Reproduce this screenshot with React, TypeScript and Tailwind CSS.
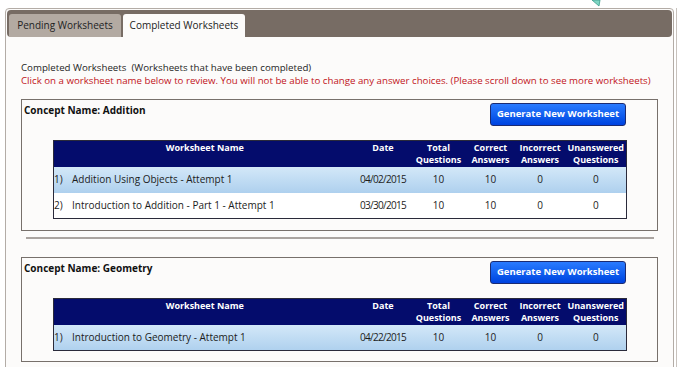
import React from "react";

type Row = { n: string; name: string; date: string; total: string; correct: string; incorrect: string; unanswered: string };

const font = { fontFamily: '"Open Sans", "Noto Sans", sans-serif' };

function WorksheetTable({ rows }: { rows: Row[] }) {
  return (
    <table className="border-collapse border border-[#2a2a3a] table-fixed w-[573px]">
      <colgroup>
        <col className="w-[302px]" />
        <col className="w-[55px]" />
        <col className="w-[56px]" />
        <col className="w-[48px]" />
        <col className="w-[51px]" />
        <col className="w-[61px]" />
      </colgroup>
      <thead>
        <tr className="bg-[#040c6c] text-white font-bold text-[9px] leading-[12px] h-[26px] align-top">
          <th className="pt-px font-bold">Worksheet Name</th>
          <th className="pt-px font-bold">Date</th>
          <th className="pt-px font-bold">Total<br />Questions</th>
          <th className="pt-px font-bold">Correct<br />Answers</th>
          <th className="pt-px font-bold">Incorrect<br />Answers</th>
          <th className="pt-px font-bold">Unanswered<br />Questions</th>
        </tr>
      </thead>
      <tbody>
        {rows.map((r, i) => (
          <tr
            key={i}
            className={
              "h-[26px] text-[10px] text-[#1c1c1c] " +
              (i % 2 === 0 ? "bg-gradient-to-b from-[#d3e8f8] to-[#aed0ee]" : "bg-white")
            }
          >
            <td className="pl-0">
              <span className="inline-block w-[18px]">{r.n}</span>
              {r.name}
            </td>
            <td className="text-center tracking-[-0.7px]">{r.date}</td>
            <td className="text-center">{r.total}</td>
            <td className="text-center">{r.correct}</td>
            <td className="text-center">{r.incorrect}</td>
            <td className="text-center">{r.unanswered}</td>
          </tr>
        ))}
      </tbody>
    </table>
  );
}

function ConceptBox({ title, rows, height }: { title: string; rows: Row[]; height: string }) {
  return (
    <div className={"ml-[14px] w-[637px] border-[1.5px] border-[#77706b] " + height}>
      <div className="flex justify-between items-start">
        <div className="pl-[2px] pt-[3px] text-[10px] font-bold text-[#111]">Concept Name: {title}</div>
        <button className="mt-[3px] mr-[31px] w-[136px] h-[23px] rounded-[3px] border border-[#1b2b72] bg-gradient-to-b from-[#2a7bff] to-[#0042e0] text-white font-bold text-[9.5px]">
          Generate New Worksheet
        </button>
      </div>
      <div className="ml-[31px] mt-[14px]">
        <WorksheetTable rows={rows} />
      </div>
    </div>
  );
}

export default function App() {
  const add: Row[] = [
    { n: "1)", name: "Addition Using Objects - Attempt 1", date: "04/02/2015", total: "10", correct: "10", incorrect: "0", unanswered: "0" },
    { n: "2)", name: "Introduction to Addition - Part 1 - Attempt 1", date: "03/30/2015", total: "10", correct: "10", incorrect: "0", unanswered: "0" },
  ];
  const geo: Row[] = [
    { n: "1)", name: "Introduction to Geometry - Attempt 1", date: "04/22/2015", total: "10", correct: "10", incorrect: "0", unanswered: "0" },
  ];
  return (
    <div className="relative w-[679px] h-[367px] overflow-hidden bg-white" style={font}>
      <svg className="absolute left-[591px] top-0" width="10" height="7" viewBox="0 0 10 7">
        <path d="M1 0 L9 0 L8 6 Z" fill="#7fd6c4" stroke="#3a9c8a" strokeWidth="0.8" />
      </svg>
      <div className="absolute left-[676px] top-[8px] w-px h-[360px] bg-[#c8c2bd]" />
      <div className="ml-[5px] mt-[8px] w-[669px] h-[400px] border border-[#b3aca6] rounded-t-[4px] bg-[#fcfbfa] p-px">
        <div className="h-[27px] rounded-[4px] bg-[#776c64] flex items-end pl-[2px] gap-[2px]">
          <div className="w-[112px] h-[23px] rounded-t-[3px] bg-[#b3aaa2] text-[10px] text-[#222] flex items-center justify-center">
            Pending Worksheets
          </div>
          <div className="w-[122px] h-[23px] rounded-t-[3px] bg-[#fcfbfa] text-[10px] text-[#222] flex items-center justify-center">
            Completed Worksheets
          </div>
        </div>
        <div className="pl-[14px] pt-[24px] text-[9.7px] leading-[13px]">
          <div className="text-[#1e1e1e] whitespace-pre">Completed Worksheets  (Worksheets that have been completed)</div>
          <div className="text-[#c1141b]">
            Click on a worksheet name below to review. You will not be able to change any answer choices. (Please scroll down to see more worksheets)
          </div>
        </div>
        <div className="mt-[12px]">
          <ConceptBox title="Addition" rows={add} height="h-[132px]" />
        </div>
        <div className="ml-[19px] mt-[6px] w-[628px] h-[2px] bg-[#aaa4a0]" />
        <div className="mt-[18px]">
          <ConceptBox title="Geometry" rows={geo} height="h-[105px]" />
        </div>
      </div>
    </div>
  );
}
